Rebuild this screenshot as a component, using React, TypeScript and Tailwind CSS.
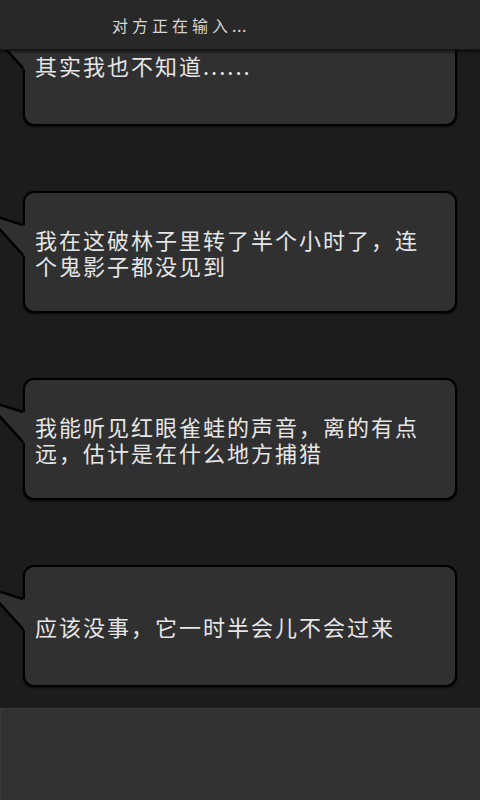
const messages = [
  "其实我也不知道......",
  "我在这破林子里转了半个小时了，连个鬼影子都没见到",
  "我能听见红眼雀蛙的声音，离的有点远，估计是在什么地方捕猎",
  "应该没事，它一时半会儿不会过来",
];

function Tail() {
  // little speech pointer on the bubble's left edge, apex runs off screen
  return (
    <svg
      className="absolute left-[-40px] top-0 overflow-visible"
      width="46"
      height="80"
      viewBox="-40 0 46 80"
    >
      <polygon points="-38,22 4,35 4,68" fill="#303030" />
      <polyline
        points="0,34 -38,22 0,64"
        fill="none"
        stroke="#000"
        strokeWidth="2.5"
        strokeLinejoin="miter"
      />
    </svg>
  );
}

function Bubble({ text }: { text: string }) {
  return (
    <div className="relative ml-[23px] w-[434px] h-[122px] shrink-0">
      <div className="h-full w-full rounded-[11px] border-[2.5px] border-black bg-[#303030] shadow-[0_1px_2px_rgba(0,0,0,0.8)] flex items-center pl-[10px] pr-[24px]">
        <p className="text-[22px] leading-[26px] tracking-[2px] text-[#e6e6e6]">{text}</p>
      </div>
      <Tail />
    </div>
  );
}

export default function App() {
  return (
    <div
      className="relative w-[480px] h-[800px] overflow-hidden bg-[#1c1c1c] flex flex-col"
      style={{ fontFamily: '"Noto Sans CJK SC", "Noto Sans", sans-serif' }}
    >
      <div className="flex-1 flex flex-col gap-[65px] pt-[4px] overflow-hidden">
        {messages.map((m, i) => (
          <Bubble key={i} text={m} />
        ))}
      </div>

      <div className="h-[92px] bg-[#323232] border-t border-l border-[#3c3c3c]" />

      <div className="absolute top-0 left-0 right-0 h-[50px] bg-[#282828] border-b border-[#151515] shadow-[0_2px_3px_rgba(0,0,0,0.6)] flex items-center pl-[112px]">
        <span className="text-[16px] text-[#d6d6d6]">
          <span className="tracking-[4px]">对方正在输入</span>
          <span className="tracking-[0.5px]">...</span>
        </span>
      </div>
    </div>
  );
}
